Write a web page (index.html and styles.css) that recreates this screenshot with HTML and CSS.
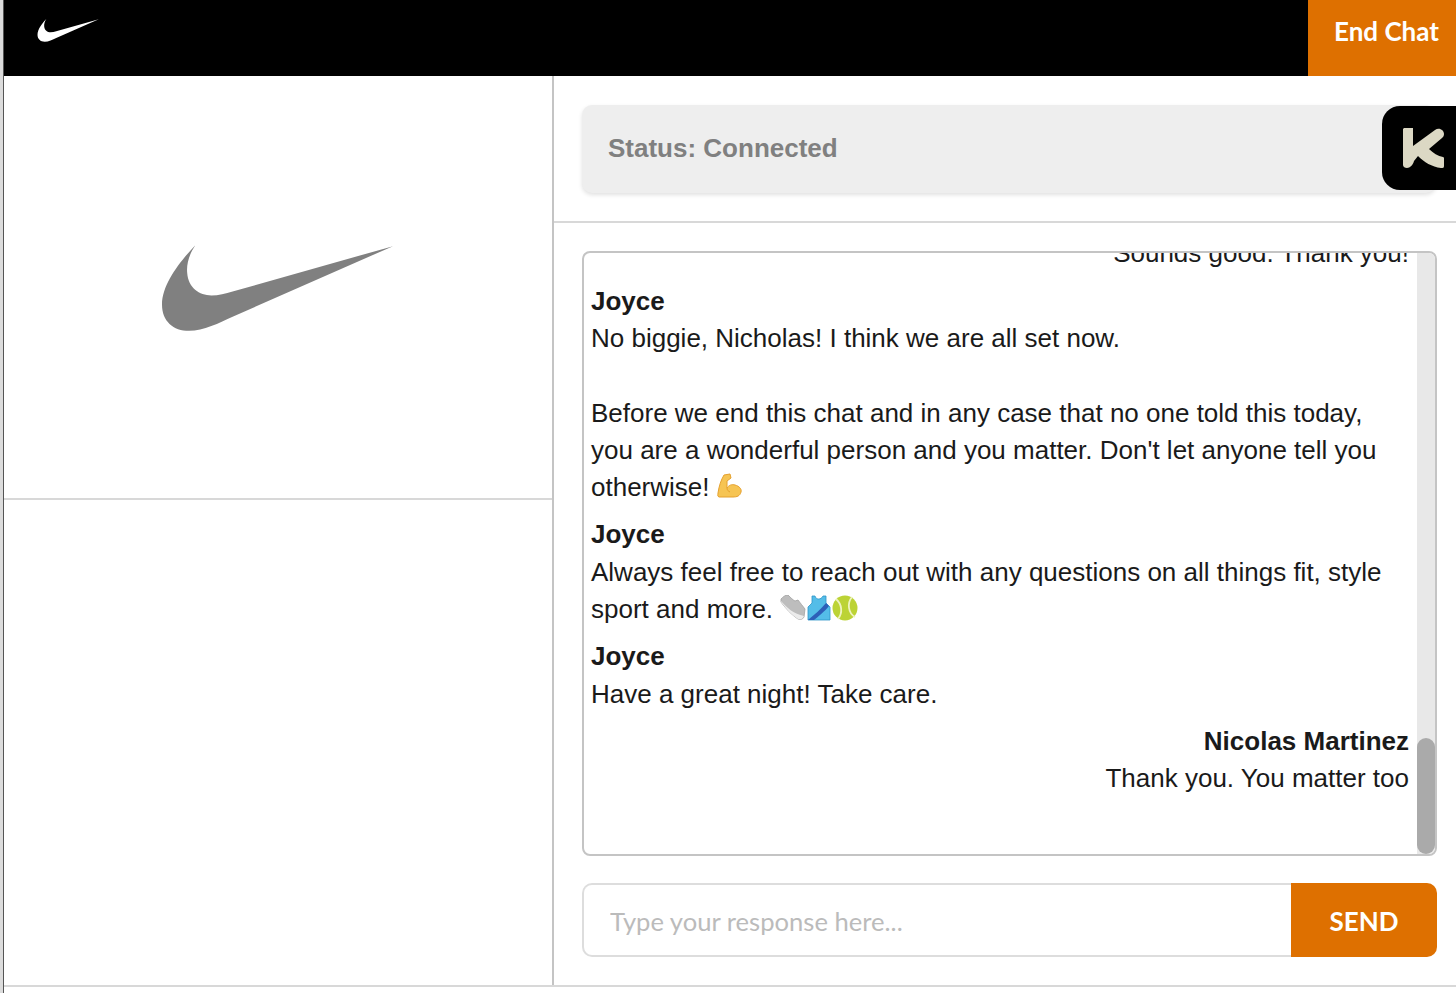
FILE: index.html
```html
<!DOCTYPE html>
<html lang="en">
<head>
    <meta charset="UTF-8">
    <meta name="viewport" content="width=device-width, initial-scale=1.0">
    <title>Chat</title>
    <link rel="stylesheet" href="styles.css">
</head>
<body>

    <div class="edge"></div>

    <div class="page">

        <!-- top bar -->
        <header class="topbar">
            <svg class="logo-small" viewBox="0 0 230 86"><path d="M34 0C28 9 25 19 26 28C27 42 38 50 50 50C57 50 64 48 71 46L230 1L71 71C58 77 42 85 28 85C12 85 1 75 1 59C1 38 20 15 34 0Z"/></svg>
            <button class="end-chat" type="button">End Chat</button>
        </header>

        <div class="main">

            <!-- left column -->
            <aside class="side">
                <div class="brand">
                    <svg class="logo-big" viewBox="0 0 230 86"><path d="M34 0C28 9 25 19 26 28C27 42 38 50 50 50C57 50 64 48 71 46L230 1L71 71C58 77 42 85 28 85C12 85 1 75 1 59C1 38 20 15 34 0Z"/></svg>
                </div>
            </aside>

            <!-- chat column -->
            <section class="chat">

                <div class="status-row">
                    <div class="status">Status: Connected</div>
                    <div class="badge">
                        <svg viewBox="0 0 74 84" width="74" height="84">
                            <path class="k" d="M22 22H31V40L53 24C57 21 62 24 62 28C62 30 61 31 60 32L47 43C51 47 56 50 61 51C62 51 62 52 62 53V60C62 62 61 62 59 62C50 61 42 56 36 50L32 55C31 59 28 62 25 62C23 62 21 61 21 59V23Z"/>
                        </svg>
                    </div>
                </div>

                <div class="log-row">
                    <div class="log">
                        <div class="scroll">
                            <div class="msg mine">
                                <p>Sounds good. Thank you!</p>
                            </div>
                            <div class="msg">
                                <h4>Joyce</h4>
                                <p>No biggie, Nicholas! I think we are all set now.<br><br>Before we end this chat and in any case that no one told this today, you are a wonderful person and you matter. Don't let anyone tell you otherwise!
                                    <span class="emojis">
                                        <svg class="emoji" viewBox="0 0 26 26"><path fill="#f6c453" stroke="#e4a02e" stroke-width="1" d="M7 2L13 1L14 5L10 8L10 15C12 12 15 11 18 12C22 13 25 16 24 19C23 23 20 24 16 24L2 24C0 23 1 22 1 20C2 13 4 7 7 2Z"/><path fill="none" stroke="#e4a02e" stroke-width="1" d="M10 15C10 17 11 18 13 19"/></svg>
                                    </span>
                                </p>
                            </div>
                            <div class="msg">
                                <h4>Joyce</h4>
                                <p>Always feel free to reach out with any questions on all things fit, style sport and more.
                                    <span class="emojis">
                                        <svg class="emoji" viewBox="0 0 26 26"><path fill="#bdbdbd" stroke="#a2a2a2" stroke-width=".8" d="M1 4C3 2 5 0 8 0C11 3 13 5 15 6L18 5C20 8 23 11 25 14L24 22C23 24 21 25 18 24C12 20 6 14 1 7Z"/><path fill="#ececec" d="M1 6C7 13 14 19 24 21L23 23C21 25 19 24 18 24C12 20 6 14 1 7Z"/></svg>
                                        <svg class="emoji" viewBox="0 0 26 26"><path fill="#54bde8" stroke="#2f95c8" stroke-width=".8" d="M6 1H9C10 5 15 5 17 1H20L20 8L24 12V25H2V12L6 8Z"/><path fill="#2d5fb8" d="M20 8L23 11C19 16 12 22 8 25H2C8 20 15 14 20 8Z"/></svg>
                                        <svg class="emoji" viewBox="0 0 26 26"><circle cx="13" cy="13" r="12.5" fill="#bcd335"/><path fill="none" stroke="#eef3c0" stroke-width="1.8" d="M4 4C10 9 11 18 6 24M20 2C15 8 16 18 23 22"/></svg>
                                    </span>
                                </p>
                            </div>
                            <div class="msg">
                                <h4>Joyce</h4>
                                <p>Have a great night! Take care.</p>
                            </div>
                            <div class="msg mine">
                                <h4>Nicolas Martinez</h4>
                                <p>Thank you. You matter too</p>
                            </div>
                        </div>
                        <div class="track"><div class="thumb"></div></div>
                    </div>
                </div>

                <form class="reply">
                    <input type="text" placeholder="Type your response here...">
                    <button type="button">SEND</button>
                </form>

            </section>
        </div>
    </div>

</body>
</html>
```

FILE: styles.css
```css
* {
    box-sizing: border-box;
}

body {
    display: flex;
    height: 993px;
    margin: 0;
    overflow: hidden;
    background-color: #fff;
    color: #1a1a1a;
    font-family: "Liberation Sans", Arial, sans-serif;
}

.edge {
    width: 4px;
    background-color: #dcdcdc;
    border-right: 1px solid #555;
}

.page {
    flex: 1;
    display: flex;
    flex-direction: column;
    padding-bottom: 6px;
}

.topbar {
    display: flex;
    justify-content: space-between;
    height: 76px;
    background-color: #000;
}

.logo-small {
    width: 62px;
    height: 23px;
    margin: 19px 0 0 33px;
    fill: #fff;
}

.end-chat {
    width: 148px;
    padding: 0 0 15px 9px;
    border: none;
    background-color: #de7000;
    color: #fff;
    font-family: Lato, sans-serif;
    font-size: 26px;
    font-weight: 700;
}

.main {
    flex: 1;
    display: flex;
    border-bottom: 2px solid #d8d8d8;
}

.side {
    width: 550px;
    border-right: 2px solid #c4c4c4;
}

.brand {
    display: flex;
    height: 424px;
    padding: 169px 0 0 157px;
    border-bottom: 2px solid #d8d8d8;
}

.logo-big {
    width: 232px;
    height: 87px;
    fill: #808080;
}

.chat {
    flex: 1;
    display: flex;
    flex-direction: column;
}

.status-row {
    position: relative;
    height: 147px;
    padding: 29px 20px 0 28px;
    border-bottom: 2px solid #d8d8d8;
}

.status {
    height: 88px;
    padding-left: 26px;
    border-radius: 10px;
    background-color: #eee;
    box-shadow: 0 2px 4px rgba(0, 0, 0, 0.12);
    color: #808080;
    font-size: 26px;
    font-weight: 700;
    line-height: 86px;
}

.badge {
    position: absolute;
    top: 30px;
    right: 0;
    width: 74px;
    height: 84px;
    border-radius: 18px 0 0 18px;
    background-color: #000;
}

.k {
    fill: #dcd8c4;
}

.log-row {
    padding: 28px 19px 0 28px;
}

.log {
    display: flex;
    height: 605px;
    overflow: hidden;
    border: 2px solid #c4c4c4;
    border-radius: 8px;
}

.scroll {
    flex: 1;
    display: flex;
    flex-direction: column;
    justify-content: flex-end;
    gap: 10px;
    padding: 0 8px 56.5px 7px;
    overflow: hidden;
}

.msg h4,
.msg p {
    margin: 0;
    font-size: 26px;
    line-height: 37.3px;
}

.msg h4 {
    font-weight: 700;
}

.mine {
    text-align: right;
}

.emoji {
    flex: none;
    width: 26px;
    height: 26px;
}

/* keeps the tall icons from pushing the line height */
.emojis {
    display: inline-flex;
    height: 16px;
    align-items: center;
    vertical-align: -2.5px;
}

.track {
    display: flex;
    flex-direction: column;
    justify-content: flex-end;
    width: 18px;
    background-color: #e8e8e8;
}

.thumb {
    height: 116px;
    border-radius: 9px;
    background-color: #aaa;
}

.reply {
    display: flex;
    height: 74px;
    margin: 27px 19px 0 28px;
}

.reply input {
    flex: 1;
    min-width: 0;
    padding: 2px 26px 0;
    border: 2px solid #ddd;
    border-right: none;
    border-radius: 10px 0 0 10px;
    font-family: Lato, sans-serif;
    font-size: 25.6px;
    outline: none;
}

.reply input::placeholder {
    color: #bbb;
}

.reply button {
    width: 146px;
    padding: 2px 0 0;
    border: none;
    border-radius: 0 10px 10px 0;
    background-color: #de7000;
    color: #fff;
    font-family: Lato, sans-serif;
    font-size: 26px;
    font-weight: 700;
}
```
